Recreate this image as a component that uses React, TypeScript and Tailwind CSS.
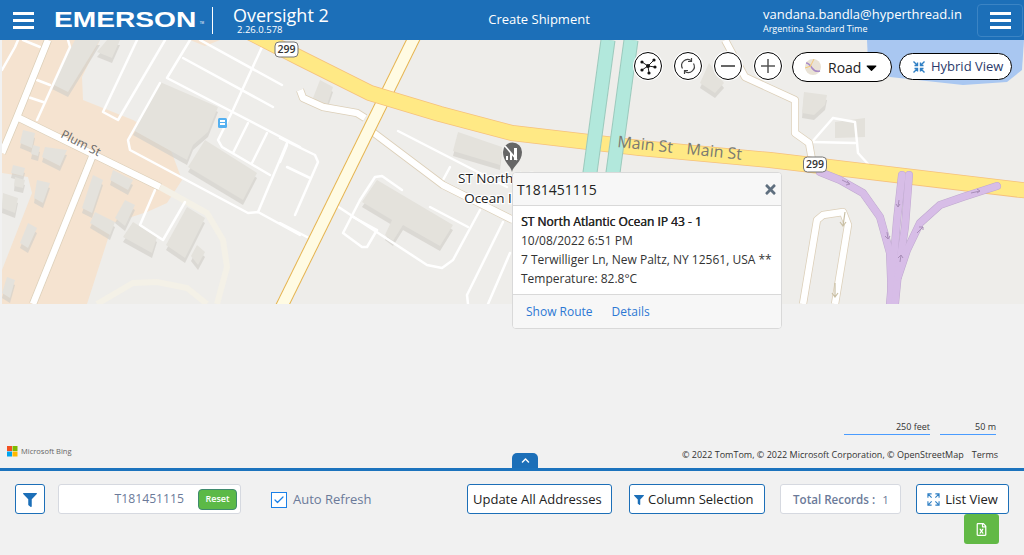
import { FaCaretDown, FaChevronUp, FaFilter, FaRegFileExcel, FaTimes } from "react-icons/fa";
import { Check } from "lucide-react";

// road polylines in page coordinates
const thinRoads = [
  "2,70 15,47 18,40",
  "23,40 40,47",
  "37,80 50,85",
  "28,97 43,102",
  "68,40 70,47 37,120",
  "137,40 103,112 118,120 165,40",
  "190,40 167,78 300,147",
  "183,58 273,107",
  "200,40 282,85",
  "262,47 233,110 218,140 222,147 270,175",
  "248,123 233,153",
  "267,133 252,163",
  "287,143 258,212",
  "160,83 128,140 130,150 248,213 258,212 300,235",
  "155,190 140,225 163,240 185,202",
  "280,138 315,155 318,162 295,215",
  "287,167 310,178",
  "280,162 287,145",
  "280,223 307,237",
  "398,131 507,187",
  "450,167 443,180",
  "337,206 427,265 442,268 453,260 480,210",
  "360,200 343,233 362,247 367,247 377,230",
  "360,200 375,177 382,176 402,190",
  "430,207 468,227",
  "353,217 377,230",
  "503,222 467,295 468,304",
  "510,253 488,304",
  "833,118 855,122 858,153 868,164",
  "812,142 833,118",
  "812,142 855,143",
];

const wideRoads = [
  "48,40 17,117 2,153",
  "17,117 160,187",
  "92,157 33,304",
  "725,40 745,77 795,100 795,133 809,143 812,160",
  "300,90 303,98 323,107 357,113 365,118",
  "370,130 443,185 513,220",
  "803,304 817,220 823,215 843,212 848,225 835,304",
];

const paleRoads = [
  "160,187 207,213 223,240 227,267 217,304",
  "97,304 133,283 157,282 187,288 207,304",
];

const purpleRoads = [
  "820,172 840,180 863,193 880,217 890,253 892,304",
  "902,175 897,220 890,304",
  "909,175 905,227 898,273 895,304",
  "997,186 963,197 940,205 920,223 907,250 898,277",
];

const buildings = [
  "160,82 218,107 208,132 193,145 187,160 133,130",
  "205,140 257,173 243,200 188,167",
  "75,40 100,40 68,92 52,84",
  "107,40 120,40 112,58 97,52",
  "23,130 35,133 32,148 20,143",
  "33,145 40,147 38,156 31,154",
  "45,147 67,150 60,166 42,157",
  "13,165 25,168 23,176 11,173",
  "15,177 25,180 23,188 14,186",
  "37,180 50,183 43,203 34,198",
  "3,193 18,198 15,213 2,208",
  "28,223 37,228 28,248 20,243",
  "7,277 15,280 10,298 2,293",
  "93,175 103,180 92,213 82,208",
  "113,170 133,180 128,190 110,180",
  "125,200 135,205 125,226 115,218",
  "95,212 115,222 110,235 90,223",
  "133,222 157,237 152,253 123,237",
  "187,207 205,218 185,258 166,245",
  "197,245 205,252 198,265 191,256",
  "320,80 333,87 327,105 313,98",
  "377,180 453,225 440,246 403,225 393,241 385,235 392,220 362,202",
  "458,132 502,147 500,165 453,151",
  "709,63 724,83 715,93 700,83",
  "804,92 827,95 825,105 814,115 802,113",
];

function MapShield({ x, y }: { x: number; y: number }) {
  return (
    <g>
      <rect x={x} y={y} width="23" height="15" rx="4" fill="#fff" stroke="#777" strokeWidth="1" />
      <text x={x + 11.5} y={y + 11} textAnchor="middle" fontSize="10.5" fontWeight="600" fill="#333">
        299
      </text>
    </g>
  );
}

function MapDrawing() {
  return (
    <svg viewBox="2 40 1022 264" className="block h-[264px] w-[1022px] font-['Open_Sans',sans-serif]">
      <rect x="2" y="40" width="1022" height="264" fill="#eeedea" />
      <polygon
        points="2,40 100,40 82,77 83,100 133,120 167,140 182,180 167,203 147,212 113,223 87,304 2,304 2,270 32,193 28,177 2,173"
        fill="#f5e3d0"
      />
      <polygon points="190,40 220,40 205,46" fill="#f5e3d0" />
      <polygon points="867,40 1024,40 1022,70 1007,82 963,85 890,77 868,62" fill="#a9c7f1" />
      {buildings.map((p) => (
        <g key={p}>
          <polygon points={p} fill="#d3d0ca" fillOpacity="0.7" transform="translate(0 5)" />
          <polygon points={p} fill="#e4e2dc" />
        </g>
      ))}
      <polygon points="835,122 865,118 865,137 835,138" fill="#e3e1db" />
      {paleRoads.map((p) => (
        <polyline key={p} points={p} fill="none" stroke="#f4f1e7" strokeWidth="6" />
      ))}
      {thinRoads.map((p) => (
        <polyline key={p} points={p} fill="none" stroke="#fff" strokeWidth="2.5" strokeLinejoin="round" strokeLinecap="round" />
      ))}
      {wideRoads.map((p) => (
        <polyline key={p} points={p} fill="none" stroke="#dccfb8" strokeWidth="8" strokeLinejoin="round" />
      ))}
      {wideRoads.map((p) => (
        <polyline key={p} points={p} fill="none" stroke="#fff" strokeWidth="6.5" strokeLinejoin="round" />
      ))}
      <polyline points="416,34 280,310" fill="none" stroke="#e6b44f" strokeWidth="13" />
      <polyline points="416,34 280,310" fill="none" stroke="#fffbe3" strokeWidth="11" />
      <polyline
        points="245,30 300,58 370,93 440,114 512,133 640,148 770,160 1030,191"
        fill="none"
        stroke="#f6c07c"
        strokeWidth="16"
        strokeLinejoin="round"
      />
      <polyline
        points="245,30 300,58 370,93 440,114 512,133 640,148 770,160 1030,191"
        fill="none"
        stroke="#ffe985"
        strokeWidth="14.5"
        strokeLinejoin="round"
      />
      <polyline points="608,40 589,180" fill="none" stroke="#9ccabd" strokeWidth="15" />
      <polyline points="608,40 589,180" fill="none" stroke="#b2e8dc" strokeWidth="13" />
      <polyline points="631,40 612,180" fill="none" stroke="#9ccabd" strokeWidth="15" />
      <polyline points="631,40 612,180" fill="none" stroke="#b2e8dc" strokeWidth="13" />
      {purpleRoads.map((p) => (
        <polyline key={p} points={p} fill="none" stroke="#bfa8cf" strokeWidth="8" strokeLinecap="round" strokeLinejoin="round" />
      ))}
      {purpleRoads.map((p) => (
        <polyline key={p} points={p} fill="none" stroke="#d7bde7" strokeWidth="7" strokeLinecap="round" strokeLinejoin="round" />
      ))}
      <g fill="none" stroke="#a98fb8" strokeWidth="1">
        <path d="M842 180l8 4m-3-3l3 3-4 1" />
        <path d="M887 232l1 7m-3-3l3 3 2-3" />
        <path d="M899 200l-1 7m-2-3l2 3 2-3" />
        <path d="M900 262l1-7m-3 3l3-3 2 3" />
        <path d="M917 233l6-6m-4 0l4 0 0 3" />
        <path d="M971 193l9-2m-3-2l3 2-3 2" />
      </g>
      <g fill="none" stroke="#c9bfa4" strokeWidth="1.2">
        <path d="M845 212l-2 14m-3-4l3 4 3-4" />
        <path d="M835 283l0 14m-3-4l3 4 3-4" />
      </g>
      <MapShield x={275} y={42} />
      <MapShield x={803.5} y={157} />
      <text x="60" y="137" fontSize="12" fill="#666" transform="rotate(27 60 137)">
        Plum St
      </text>
      <text x="617" y="147" fontSize="16" fill="#7a7a72" transform="rotate(6 617 147)">
        Main St
      </text>
      <text x="686" y="154" fontSize="16" fill="#7a7a72" transform="rotate(6 686 154)">
        Main St
      </text>
      <rect x="218" y="118" width="9" height="10" rx="1.5" fill="#55b0f0" />
      <path d="M220 120h5v5h-5z" fill="#fff" />
      <path d="M220 122.5h5" stroke="#55b0f0" strokeWidth="1" />
      <path d="M512 172c-1-6-9-10-9-20a9.5 9.5 0 0 1 19 0c0 10-9 14-10 20z" fill="#666" />
      <path d="M506 160v-4h2v4zM510 160v-7h2v7zM514 160v-12h3v12z" fill="#fff" />
      <path d="M505 146l12 14" stroke="#fff" strokeWidth="1.6" />
      <g fontSize="13.5" fill="#222" textAnchor="middle" stroke="#fff" strokeWidth="2.5" style={{ paintOrder: "stroke" }}>
        <text x="511" y="183">ST North Atlantic</text>
        <text x="511" y="203">Ocean IP 43 - 1</text>
      </g>
    </svg>
  );
}

function Bars() {
  return (
    <div className="flex h-[17px] w-[21px] shrink-0 flex-col justify-between">
      <div className="h-[3px] bg-white" />
      <div className="h-[3px] bg-white" />
      <div className="h-[3px] bg-white" />
    </div>
  );
}

function RoundControl({ children }: { children: React.ReactNode }) {
  return (
    <button className="flex h-[28px] w-[28px] items-center justify-center rounded-full border border-black bg-white shadow-[0_0_0_1px_#fff]">
      <svg viewBox="0 0 24 24" className="h-[24px] w-[24px]" fill="none">
        {children}
      </svg>
    </button>
  );
}

function OutlineButton({ className, children }: { className: string; children: React.ReactNode }) {
  return (
    <button className={`flex h-[30px] shrink-0 items-center rounded-[3px] border border-[#1c6fb8] bg-white pt-px text-[13px] text-[#222] ${className}`}>
      {children}
    </button>
  );
}

export default function App() {
  return (
    <div className="flex h-[555px] w-[1024px] flex-col overflow-hidden bg-[#f1f1f1] font-['Open_Sans',sans-serif]">
      <header className="flex h-10 shrink-0 items-center bg-[#1c6fb8] text-white">
        <div className="ml-[13px] shrink-0">
          <Bars />
        </div>
        <div className="ml-[20px] flex w-[158px] shrink-0 items-start font-['Liberation_Sans',sans-serif] text-[22.5px] font-bold">
          <span className="origin-left scale-x-[1.25]">EMERSON</span>
          <span className="mt-[18px] ml-[32px] text-[3px] font-normal">TM</span>
        </div>
        <div className="h-[27px] w-px shrink-0 bg-white" />
        <div className="ml-[20px] flex w-[200px] shrink-0 flex-col">
          <span className="text-[18px] leading-[20px]">Oversight 2</span>
          <span className="ml-[4px] text-[9.5px] leading-[10px]">2.26.0.578</span>
        </div>
        <div className="ml-[55px] w-[102px] shrink-0 text-center text-[13px] whitespace-nowrap">Create Shipment</div>
        <div className="ml-[173px] flex w-[199px] shrink-0 flex-col whitespace-nowrap">
          <span className="text-[13px] leading-[17px]">vandana.bandla@hyperthread.in</span>
          <span className="text-[9px] leading-[12px]">Argentina Standard Time</span>
        </div>
        <button className="ml-[15px] flex h-[33px] w-[46px] shrink-0 items-center justify-center rounded-[4px] border border-[#3b84c4]">
          <Bars />
        </button>
      </header>

      <main className="relative flex h-[428px] shrink-0 flex-col pl-[2px]">
        <MapDrawing />

        <div className="absolute top-[12px] left-[634px] flex items-center gap-[12px]">
          <RoundControl>
            <g stroke="#222" strokeWidth="1">
              <path d="M12 12L6 8M12 12L18 6M12 12L19 13M12 12L13 19M12 12L6 16" />
            </g>
            <g fill="#111">
              <circle cx="12" cy="12" r="2" />
              <circle cx="6" cy="8" r="1.6" />
              <circle cx="18" cy="6" r="1.6" />
              <circle cx="19" cy="13" r="1.6" />
              <circle cx="13" cy="19" r="1.6" />
              <circle cx="6" cy="16" r="1.6" />
            </g>
          </RoundControl>
          <RoundControl>
            <path d="M6.5 14.5A6 6 0 0 1 15 6.5M17.5 9.5A6 6 0 0 1 9 17.5" stroke="#444" strokeWidth="1.2" />
            <path d="M15.5 4v3.5H12M8.5 20v-3.5H12" stroke="#444" strokeWidth="1.2" />
          </RoundControl>
          <RoundControl>
            <path d="M5 12h14" stroke="#555" strokeWidth="1.8" />
          </RoundControl>
          <RoundControl>
            <path d="M5 12h14M12 5v14" stroke="#555" strokeWidth="1.5" />
          </RoundControl>
        </div>

        <button className="absolute top-[12px] left-[792px] flex h-[30px] w-[100px] items-center rounded-full border border-black bg-white pl-[12px] text-[14px] text-[#222]">
          <svg viewBox="0 0 16 16" className="h-[16px] w-[16px]">
            <circle cx="8" cy="8" r="8" fill="#e9e2d6" />
            <path d="M1 4c3 0 4 2 6 5s4 4 8 3" stroke="#a98ac6" strokeWidth="1.6" fill="none" />
            <path d="M9 0L5 8M0 9l6-2" stroke="#f2c879" strokeWidth="1" fill="none" />
          </svg>
          <span className="ml-[7px]">Road</span>
          <FaCaretDown className="ml-[2px] text-[17px] text-black" />
        </button>
        <button className="absolute top-[13px] left-[899px] flex h-[27px] w-[113px] items-center rounded-full border border-black bg-white pl-[13px] text-[13px] text-[#2b3a6b]">
          <svg viewBox="0 0 12 12" className="h-[12px] w-[12px]" fill="none" stroke="#2f7fc4" strokeWidth="1.4">
            <path d="M0.5 0.5L4.5 4.5M4.5 1.5v3h-3M11.5 0.5L7.5 4.5M7.5 1.5v3h3M0.5 11.5L4.5 7.5M4.5 10.5v-3h-3M11.5 11.5L7.5 7.5M7.5 10.5v-3h3" />
          </svg>
          <span className="ml-[6px]">Hybrid View</span>
        </button>

        <div className="absolute top-[132px] left-[512px] flex w-[270px] flex-col overflow-hidden rounded-[4px] border border-[#d9d9d9] bg-white text-[12px] leading-[19px] text-[#333]">
          <div className="flex h-[33px] items-center justify-between border-b border-[#d9d9d9] bg-[#f7f7f7] pr-[3px] pl-[4px]">
            <span className="text-[14px] text-[#222]">T181451115</span>
            <FaTimes className="text-[15px] text-[#5f6f7f]" />
          </div>
          <div className="flex h-[89px] flex-col justify-center border-b border-[#d9d9d9] pl-[8px] whitespace-nowrap">
            <span className="text-[#222] [text-shadow:0.4px_0_0_#222]">ST North Atlantic Ocean IP 43 - 1</span>
            <span>10/08/2022 6:51 PM</span>
            <span>7 Terwilliger Ln, New Paltz, NY 12561, USA **</span>
            <span>Temperature: 82.8°C</span>
          </div>
          <div className="flex h-[33px] items-center gap-[19px] bg-[#f7f7f7] pl-[13px] text-[#2c78d4]">
            <span>Show Route</span>
            <span>Details</span>
          </div>
        </div>

        <div className="absolute top-[380px] left-[844px] flex gap-[10px] text-right text-[9px] leading-[13px] text-[#333]">
          <div className="w-[86px] border-b border-[#4a9cff] pb-[1px]">250 feet</div>
          <div className="w-[56px] border-b border-[#4a9cff] pb-[1px]">50 m</div>
        </div>

        <div className="absolute top-[406px] left-[7px] flex items-center gap-[3px] text-[7.5px] text-[#666]">
          <svg viewBox="0 0 11 11" className="h-[11px] w-[11px]">
            <rect width="5" height="5" fill="#f25022" />
            <rect x="5.5" width="5" height="5" fill="#7fba00" />
            <rect y="5.5" width="5" height="5" fill="#00a4ef" />
            <rect x="5.5" y="5.5" width="5" height="5" fill="#ffb900" />
          </svg>
          Microsoft Bing
        </div>

        <div className="absolute top-[408px] left-[682px] flex gap-[8px] text-[9px] leading-[14px] whitespace-nowrap text-[#333]">
          <span>© 2022 TomTom, © 2022 Microsoft Corporation, © OpenStreetMap</span>
          <span>Terms</span>
        </div>

        <button className="absolute top-[413px] left-[512px] flex h-[15px] w-[26px] items-center justify-center rounded-t-[5px] bg-[#1c6fb8] text-white">
          <FaChevronUp className="text-[9px]" />
        </button>
      </main>

      <section className="flex flex-1 flex-col border-t-[3px] border-[#1c73bd] pt-[13px]">
        <div className="flex h-[30px] items-center">
          <OutlineButton className="ml-[15px] w-[30px] justify-center">
            <FaFilter className="text-[14px] text-[#1c6fb8]" />
          </OutlineButton>
          <div className="ml-[13px] flex h-[30px] w-[183px] shrink-0 items-center justify-end rounded-[3px] border border-[#d6d9e0] bg-white pr-[3px]">
            <span className="mr-[14px] pt-px text-[12.2px] text-[#6b7a99]">T181451115</span>
            <button className="flex h-[21px] w-[39px] items-center justify-center rounded-[4px] border border-[#3f8a6e] bg-[#5cb947] text-[9px] font-semibold text-white">
              Reset
            </button>
          </div>
          <div className="mt-px ml-[30px] flex h-[16px] w-[16px] shrink-0 items-center justify-center border-[1.5px] border-[#1a80e8] bg-white">
            <Check className="h-[12px] w-[12px] text-[#1a80e8]" strokeWidth={2.5} />
          </div>
          <span className="ml-[6px] w-[174px] shrink-0 pt-[2px] text-[13px] text-[#6b7a99]">Auto Refresh</span>
          <OutlineButton className="w-[145px] pl-[5px]">Update All Addresses</OutlineButton>
          <OutlineButton className="ml-[17px] w-[136px] gap-[4px] pl-[4px]">
            <FaFilter className="text-[10px] text-[#1c6fb8]" />
            Column Selection
          </OutlineButton>
          <div className="ml-[15px] flex h-[30px] w-[121px] shrink-0 items-center rounded-[3px] border border-[#d6d9e0] bg-white pt-px pl-[12px] text-[11.6px] text-[#6b7a99]">
            <span className="font-semibold">Total Records :</span>
            <span className="ml-[7px]">1</span>
          </div>
          <OutlineButton className="ml-[15px] w-[93px] justify-center gap-[5px]">
            <svg viewBox="0 0 14 14" className="h-[13px] w-[13px]" fill="none" stroke="#2f7fc4" strokeWidth="1.2">
              <path d="M1 5V1h4M9 1h4v4M13 9v4H9M5 13H1V9M1 1l4 4M13 1L9 5M13 13L9 9M1 13l4-4" />
            </svg>
            List View
          </OutlineButton>
        </div>
        <div className="flex justify-end pr-[25px]">
          <button className="flex h-[30px] w-[35px] items-center justify-center rounded-[3px] bg-[#62b946] text-white">
            <FaRegFileExcel className="text-[13px]" />
          </button>
        </div>
      </section>
    </div>
  );
}
